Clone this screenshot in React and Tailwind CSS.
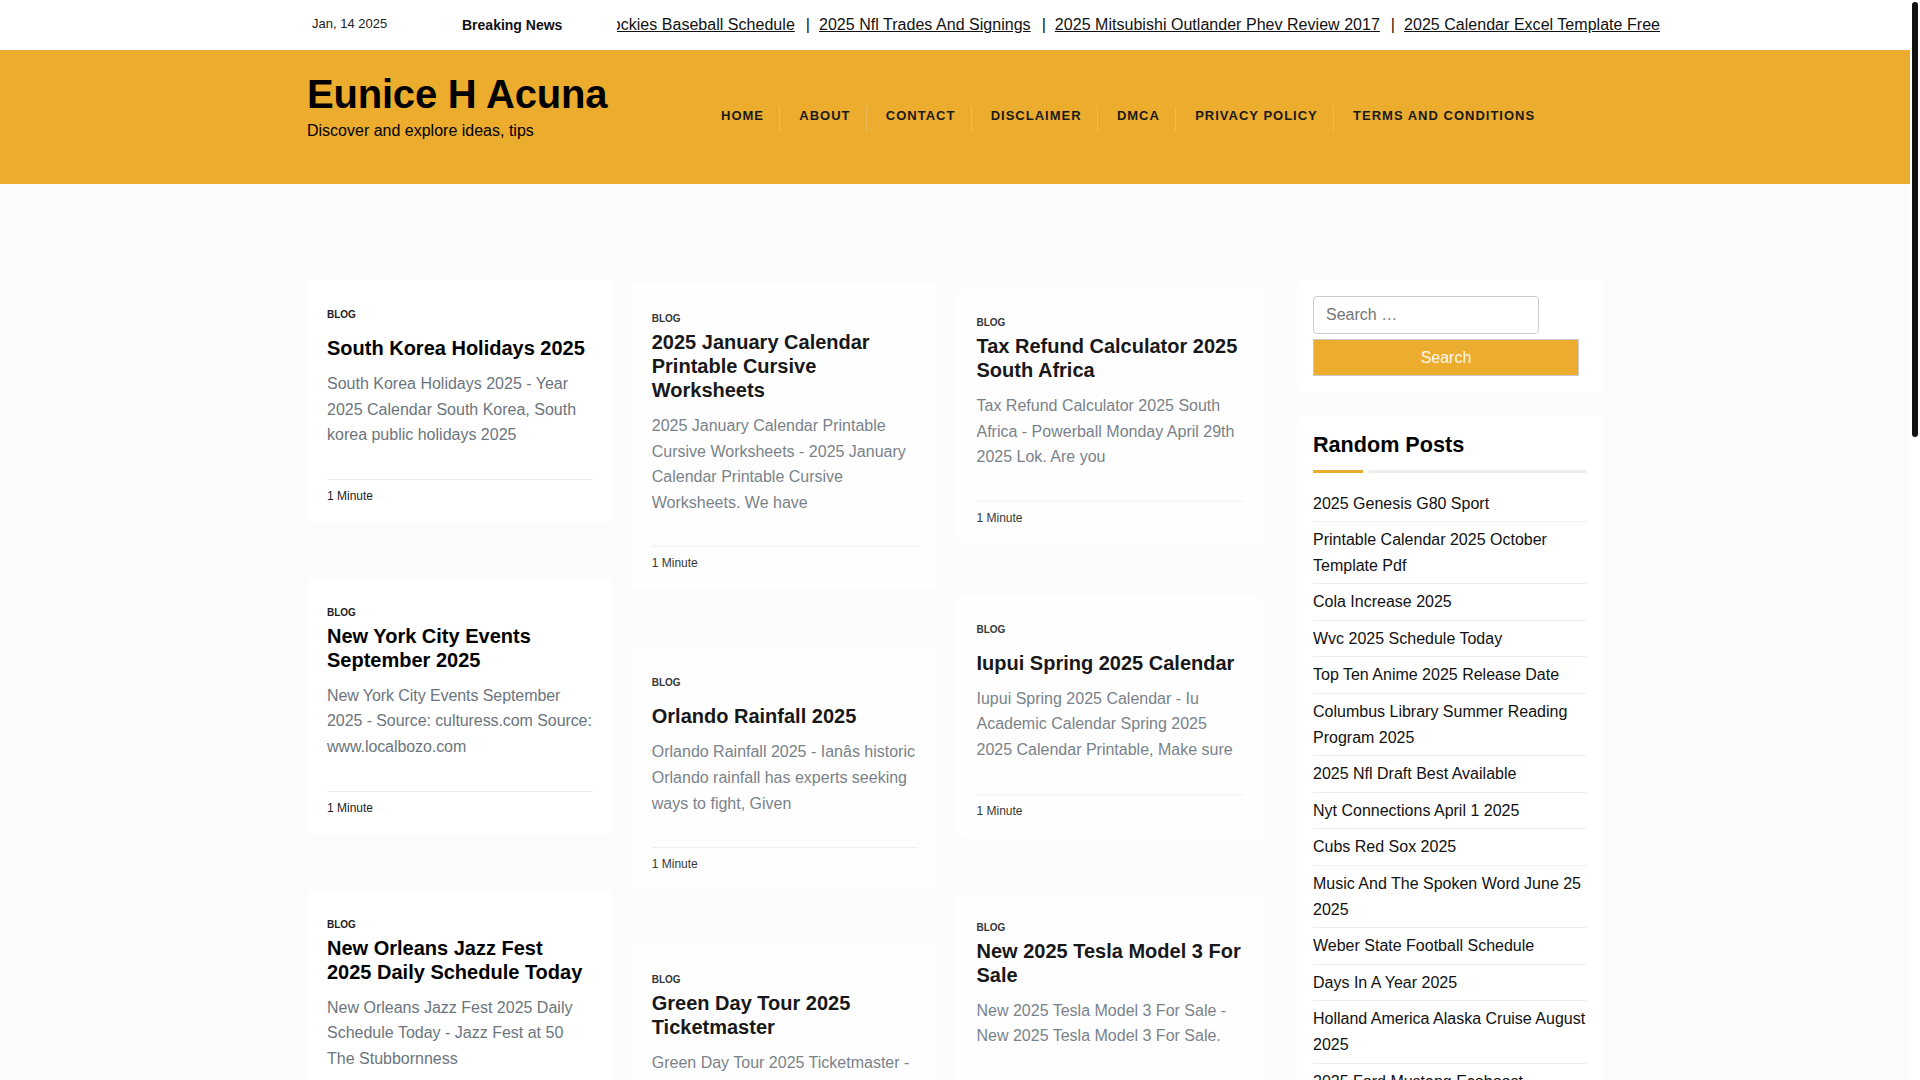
import React from 'react'

const tickerItems = [
    'Rockies Baseball Schedule',
    '2025 Nfl Trades And Signings',
    '2025 Mitsubishi Outlander Phev Review 2017',
    '2025 Calendar Excel Template Free',
]

const navItems = ['Home', 'About', 'Contact', 'Disclaimer', 'DMCA', 'Privacy Policy', 'Terms and Conditions']

const randomPosts = [
    '2025 Genesis G80 Sport',
    'Printable Calendar 2025 October Template Pdf',
    'Cola Increase 2025',
    'Wvc 2025 Schedule Today',
    'Top Ten Anime 2025 Release Date',
    'Columbus Library Summer Reading Program 2025',
    '2025 Nfl Draft Best Available',
    'Nyt Connections April 1 2025',
    'Cubs Red Sox 2025',
    'Music And The Spoken Word June 25 2025',
    'Weber State Football Schedule',
    'Days In A Year 2025',
    'Holland America Alaska Cruise August 2025',
    '2025 Ford Mustang Ecoboost',
]

const columns = [
    [
        { title: 'South Korea Holidays 2025', short: true, excerpt: 'South Korea Holidays 2025 - Year 2025 Calendar South Korea, South korea public holidays 2025' },
        { title: 'New York City Events September 2025', tight: true, excerpt: 'New York City Events September\n2025 - Source: culturess.com Source:\nwww.localbozo.com' },
        { title: 'New Orleans Jazz Fest\n2025 Daily Schedule Today', excerpt: 'New Orleans Jazz Fest 2025 Daily Schedule Today - Jazz Fest at 50 The Stubbornness' },
    ],
    [
        { title: '2025 January Calendar Printable Cursive Worksheets', motion: 'translate-y-[3.6px] opacity-90', excerpt: '2025 January Calendar Printable Cursive Worksheets - 2025 January Calendar Printable Cursive Worksheets. We have' },
        { title: 'Orlando Rainfall 2025', short: true, motion: 'translate-y-[7px] opacity-90', excerpt: 'Orlando Rainfall 2025 - Ianâs historic Orlando rainfall has experts seeking ways to fight, Given' },
        { title: 'Green Day Tour 2025 Ticketmaster', motion: 'translate-y-[6.2px] opacity-90', excerpt: 'Green Day Tour 2025 Ticketmaster - Green Day Tour 2025 Ticketmaster.' },
    ],
    [
        { title: 'Tax Refund Calculator 2025 South Africa', motion: 'translate-y-[7.6px] opacity-90', excerpt: 'Tax Refund Calculator 2025 South Africa - Powerball Monday April 29th 2025 Lok. Are you' },
        { title: 'Iupui Spring 2025 Calendar', short: true, motion: 'translate-y-[3.4px] opacity-90', excerpt: 'Iupui Spring 2025 Calendar - Iu Academic Calendar Spring 2025 2025 Calendar Printable, Make sure' },
        { title: 'New 2025 Tesla Model 3 For Sale', motion: 'translate-y-[3.4px] opacity-90', excerpt: 'New 2025 Tesla Model 3 For Sale - New 2025 Tesla Model 3 For Sale.' },
    ],
]

const PostCard = ({ title, excerpt, short, tight, motion }) => {
    return (
        <article className={`bg-white rounded-md px-5 pt-[29px] pb-[17px] mb-14 ${motion || ''}`}>
            <p className='text-[10px] leading-3 font-bold uppercase text-[#222]'>Blog</p>
            <h2 className={`text-xl leading-6 font-bold text-black whitespace-pre-line ${short ? 'mt-[15px]' : 'mt-[5px]'}`}>{title}</h2>
            <p className={`mt-[11px] text-base leading-[25.6px] text-[#6c757d] ${tight ? 'whitespace-pre tracking-[-0.08px]' : 'whitespace-pre-line'}`}>{excerpt}</p>
            <div className='mt-[31px] border-t border-[#eeeeee] pt-[7px] text-xs leading-[18px] text-[#222]'>1 Minute</div>
        </article>
    )
}

const App = () => {
    return (
        <div className="relative h-screen overflow-hidden bg-white font-['Liberation_Sans',Arial,sans-serif]">
            <div className='w-[1910px] min-h-[1080px] bg-[#fcfcfc]'>
                <div className='bg-white h-[50px]'>
                    <div className='w-[1296px] mx-auto flex items-center h-full'>
                        <span className='w-[155px] shrink-0 pl-[5px] text-[13px] text-[#222] -mt-[3px]'>Jan, 14 2025</span>
                        <span className='w-[155px] shrink-0 text-sm font-bold text-[#111]'>Breaking News</span>
                        <div className='w-[1043px] shrink-0 flex justify-end overflow-hidden whitespace-nowrap text-base tracking-[0.03px] text-[#111]'>
                            {tickerItems.map((item, i) => (
                                <span key={item} className='shrink-0 flex'>
                                    {i > 0 && <span className='pl-[11px] pr-[9px]'>|</span>}
                                    <a href='#' className='underline'>{item}</a>
                                </span>
                            ))}
                        </div>
                    </div>
                </div>

                <header className='bg-[#ecac2e] h-[134px]'>
                    <div className='w-[1296px] mx-auto flex'>
                        <div className='w-[414px] pt-5'>
                            <h1 className='text-[40px] leading-12 font-bold tracking-[-0.2px] text-black'>Eunice H Acuna</h1>
                            <p className='text-base leading-6 mt-[1px] text-black'>Discover and explore ideas, tips</p>
                        </div>
                        <nav className='flex pt-14'>
                            {navItems.map((item, i) => (
                                <a key={item} href='#' className={`h-[25px] pt-[1px] pr-[15.3px] text-[13px] leading-[18px] font-bold uppercase tracking-[1px] text-[#1a1a1a] ${i > 0 ? 'pl-[19px]' : ''} ${i < navItems.length - 1 ? 'border-r border-white/20' : ''}`}>{item}</a>
                            ))}
                        </nav>
                    </div>
                </header>

                <main className='w-[1296px] mx-auto flex justify-between pt-24'>
                    <div className='flex gap-[18.75px] w-[956px]'>
                        {columns.map((cards, i) => (
                            <div key={i} className='w-[306px]'>
                                {cards.map((card) => <PostCard key={card.title} {...card} />)}
                            </div>
                        ))}
                    </div>
                    <aside className='w-[306px]'>
                        <div className='bg-white rounded-md p-4 mb-6'>
                            <input placeholder='Search …' className='block w-[226px] h-[38px] border border-[#ccccd4] rounded-[4px] px-3 text-base text-[#333] placeholder:text-[#757575] bg-white' />
                            <button className='block mt-[5px] w-[266px] h-[37px] bg-[#ecac2e] border border-[#c8c8c8] text-base text-white/90'>Search</button>
                        </div>
                        <div className='bg-white rounded-md px-4 pt-[15px]'>
                            <h3 className='text-[21.6px] leading-7 font-bold text-black'>Random Posts</h3>
                            <div className='flex gap-[5px] mt-[11px] mb-[12.5px]'>
                                <span className='w-[50px] h-[3px] bg-[#ecac2e]'></span>
                                <span className='flex-1 h-[3px] bg-[#eeeeee]'></span>
                            </div>
                            <ul>
                                {randomPosts.map((post) => (
                                    <li key={post} className='py-[5px] border-b border-[#eeeeee] text-base leading-[25.6px] text-[#111]'>
                                        <a href='#'>{post}</a>
                                    </li>
                                ))}
                            </ul>
                        </div>
                    </aside>
                </main>
            </div>
            {/* scrollbar thumb of the long page */}
            <div className='absolute top-[2px] right-[2px] w-[6px] h-[435px] rounded-full bg-[#111]'></div>
        </div>
    )
}

export default App
